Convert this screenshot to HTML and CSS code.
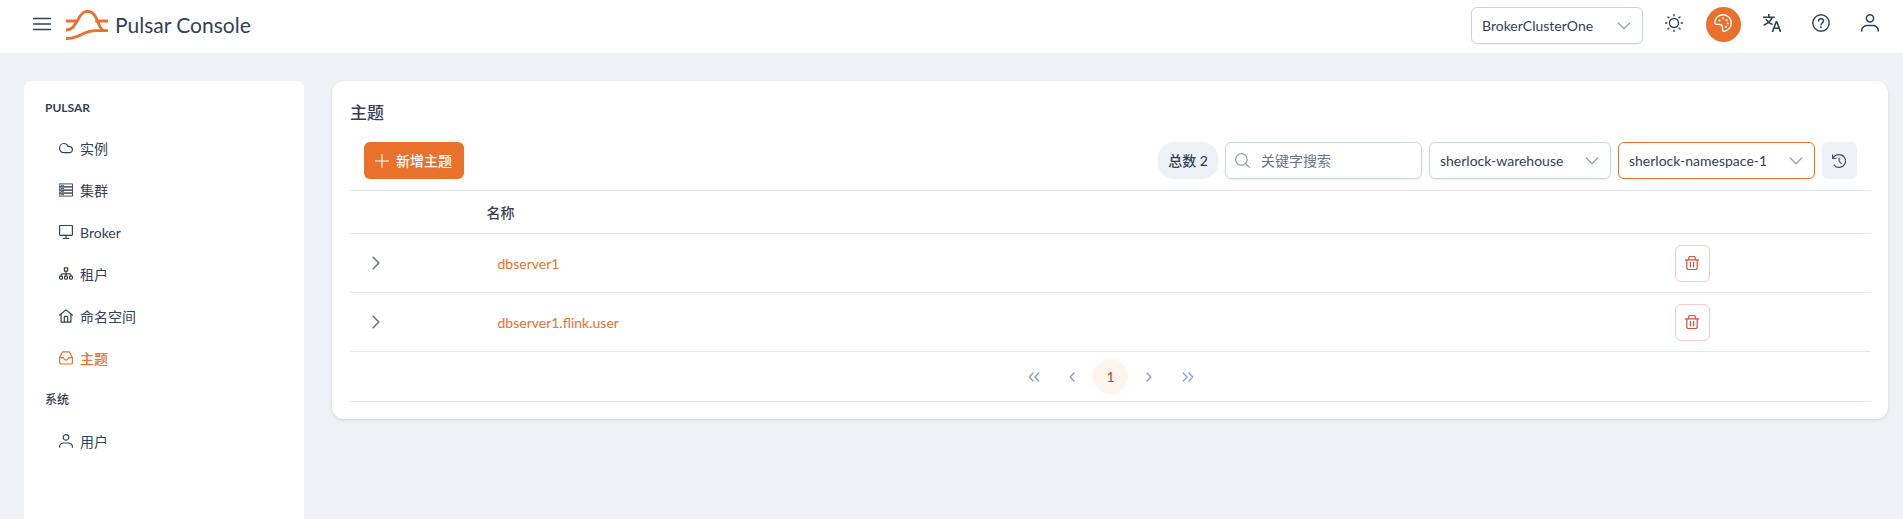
FILE: index.html
```html
<!DOCTYPE html>
<html lang="zh-CN">
<head>
<meta charset="utf-8">
<title>Pulsar Console</title>
<link rel="stylesheet" href="styles.css">
</head>
<body>
<svg class="sprite" aria-hidden="true">
  <symbol id="down" viewBox="0 0 14 14"><path d="M1.3 4 7 9.8 12.7 4"/></symbol>
  <symbol id="right" viewBox="0 0 14 14"><path d="M4.2 1.3 9.8 7 4.2 12.7"/></symbol>
  <symbol id="user" viewBox="0 0 14 14"><circle cx="7" cy="3.4" r="2.8"/><path d="M.6 13.2v-.7C.6 10.4 2.800 9 4.800 9h4.400c2 0 4.200 1.400 4.200 3.500v.7"/></symbol>
  <symbol id="trash" viewBox="0 0 14 14"><path d="M.2 3.800h13.600M1.800 3.800v8c0 1 .6 1.700 1.600 1.700h7.200c1 0 1.600-.7 1.600-1.700v-8M3.700 3.600V2c0-.9.5-1.500 1.400-1.500h3.800c.9 0 1.400.6 1.400 1.500v1.600M5.400 6.400v4.400M8.600 6.400v4.400"/></symbol>
</svg>

<header class="topbar">
  <svg class="burger icon" viewBox="0 0 18 14"><path d="M.6 1.500h16.800M.6 7h16.800M.6 12.500h16.800"/></svg>
  <svg class="logo" viewBox="0 0 126 90"><path d="M0 33h36M88 33h38M0 60C36 60 33 4 65 4s30 56 48 57M0 85.500C44 85.500 46 62 92 62h34"/></svg>
  <span class="brand">Pulsar Console</span>
  <div class="select cluster"><span>BrokerClusterOne</span><svg class="icon caret"><use href="#down"/></svg></div>
  <nav class="actions">
    <button class="action"><svg class="icon" viewBox="0 0 18 18"><circle cx="9" cy="9" r="4.500"/><path d="M9 .4v1.400M9 16.200v1.400M.4 9h1.400M16.200 9h1.400M3 3l.8.8M14.200 14.200l.8.8M3 15l.8-.8M14.200 3.800 15 3"/></svg></button>
    <button class="action primary"><svg class="icon" viewBox="0 0 18 18"><path d="M.8 8.200C1.400 3.800 4.800.8 9.100.8c4.600 0 8.200 3.600 8.200 8.200 0 4.200-3 7.500-6.900 8.200-1.200.2-1.900-.5-1.900-1.500v-2.200c0-2-1.700-3-3.500-3.100L2 10.200C1.100 10 .6 9.300.8 8.200Z"/><g class="dots"><circle cx="5.400" cy="6.600" r="1.050"/><circle cx="9" cy="4.300" r="1.050"/><circle cx="12.600" cy="6" r="1.050"/><circle cx="13.700" cy="9.500" r="1.050"/><circle cx="11.900" cy="12.900" r="1.050"/></g></svg></button>
    <button class="action"><svg class="icon bold" viewBox="0 0 18 18"><path d="M.4 3.300h10.800M5.800.3v3M9 3.500C7.800 7 4.900 9.300 1.200 10.900M3.200 5.600c1.100 1.900 3.300 3.600 5.800 4.700M9.600 17.500l3.500-9.600h.8l3.500 9.600M10.900 14.200h5.200"/></svg></button>
    <button class="action"><svg class="icon" viewBox="0 0 18 18"><circle cx="9" cy="9" r="8.200"/><path d="M6.600 7.100C6.600 5.600 7.600 4.700 9 4.700s2.500.9 2.500 2.300c0 1.800-2.500 1.900-2.500 3.900"/><circle class="solid" cx="9" cy="13.200" r=".95"/></svg></button>
    <button class="action"><svg class="icon"><use href="#user"/></svg></button>
  </nav>
</header>

<div class="layout">
  <aside class="sidebar">
    <h2 class="group">PULSAR</h2>
    <a class="item"><svg class="icon" viewBox="0 0 14 14"><path d="M4.700 11.600C2.300 11.600.6 9.600.6 7.100.6 4.500 2.400 2.500 4.800 2.500c1.900 0 3.500 1.100 4.100 2.900 2.500-.5 4.500 1 4.500 3.100 0 1.900-1.300 3.100-3.100 3.100Z"/></svg>实例</a>
    <a class="item"><svg class="icon thin" viewBox="0 0 14 14"><path d="M.5.900h13v3H.5ZM.5 3.900h13v3.200H.5ZM.5 7.100h13v3H.5ZM.5 10.100h13v3H.5ZM2 2.400h.9M3.800 2.400h.9M2 5.500h.9M3.800 5.500h.9M2 8.600h.9M3.800 8.600h.9M2 11.600h.9M3.800 11.600h.9"/></svg>集群</a>
    <a class="item"><svg class="icon" viewBox="0 0 14 14"><rect x=".6" y=".5" width="12.800" height="9.800" rx=".7"/><path d="M7 10.300v3M4.200 13.500h5.600"/></svg>Broker</a>
    <a class="item"><svg class="icon" viewBox="0 0 14 14"><path d="M5.400.8h3.200v3.300H5.400ZM7 4.100v4.800M2.100 9V8c0-.8.5-1.200 1.200-1.200h7.400c.7 0 1.200.4 1.200 1.200v1"/><rect x=".6" y="9.100" width="2.900" height="3" rx=".8"/><rect x="5.500" y="9.100" width="2.900" height="3" rx=".8"/><rect x="10.500" y="9.100" width="2.900" height="3" rx=".8"/></svg>租户</a>
    <a class="item"><svg class="icon" viewBox="0 0 14 14"><path d="M.4 6.200 7 .9l6.600 5.300M2.100 5v8.100h9.800V5M5.300 13V8.100c0-.5.3-.7.700-.7h2c.4 0 .7.200.7.700V13"/></svg>命名空间</a>
    <a class="item active"><svg class="icon" viewBox="0 0 14 14"><path d="M.6 6.700h3.500c.8 0 .7 2.500 2.900 2.500s2.100-2.500 2.900-2.500h3.500M.6 6.700v5c0 .8.5 1.300 1.300 1.300h10.200c.8 0 1.300-.5 1.300-1.300v-5L11 1.700C10.700 1 10.400.8 9.800.8H4.200c-.6 0-.9.200-1.200.9Z"/></svg>主题</a>
    <h2 class="group second">系统</h2>
    <a class="item"><svg class="icon"><use href="#user"/></svg>用户</a>
  </aside>

  <main class="card">
    <h1 class="title">主题</h1>
    <div class="toolbar">
      <button class="create"><svg class="icon" viewBox="0 0 14 14"><path d="M7 .3v13.400M.3 7h13.400"/></svg>新增主题</button>
      <div class="filters">
        <span class="total">总数 2</span>
        <div class="search"><svg class="icon" viewBox="0 0 14 14"><circle cx="6" cy="6" r="5.400"/><path d="m10 10 3.700 3.700"/></svg><span>关键字搜索</span></div>
        <div class="select tenant"><span>sherlock-warehouse</span><svg class="icon caret"><use href="#down"/></svg></div>
        <div class="select namespace"><span>sherlock-namespace-1</span><svg class="icon caret"><use href="#down"/></svg></div>
        <button class="refresh"><svg class="icon" viewBox="0 0 14 14"><path d="M.6.900v3.600h3.600M1 4.300C2.100 2 4.300.6 7.100.6a6.400 6.400 0 1 1-5 10.400M7.100 4v3.400l2.200 2"/></svg></button>
      </div>
    </div>
    <div class="row head"><span></span><span>名称</span></div>
    <div class="row">
      <svg class="icon expand"><use href="#right"/></svg>
      <a class="link">dbserver1</a>
      <button class="delete"><svg class="icon"><use href="#trash"/></svg></button>
    </div>
    <div class="row">
      <svg class="icon expand"><use href="#right"/></svg>
      <a class="link">dbserver1.flink.user</a>
      <button class="delete"><svg class="icon"><use href="#trash"/></svg></button>
    </div>
    <div class="pager">
      <span class="page"><svg class="icon" viewBox="0 0 14 14"><path d="M6.100 3 2.300 7l3.800 4M11.700 3 7.900 7l3.800 4"/></svg></span>
      <span class="page"><svg class="icon" viewBox="0 0 14 14"><path d="M9 3 5.200 7 9 11"/></svg></span>
      <span class="page current">1</span>
      <span class="page"><svg class="icon" viewBox="0 0 14 14"><path d="M5 3l3.800 4L5 11"/></svg></span>
      <span class="page"><svg class="icon" viewBox="0 0 14 14"><path d="M2.300 3l3.800 4-3.800 4M7.900 3l3.800 4-3.800 4"/></svg></span>
    </div>
  </main>
</div>
</body>
</html>
```
FILE: styles.css
```css
* { box-sizing: border-box; }

body {
  margin: 0;
  height: 519px;
  overflow: hidden;
  background: #eef2f7;
  color: #334155;
  font: 14px/17px Lato, "Noto Sans CJK SC", sans-serif;
}

button {
  display: flex;
  align-items: center;
  justify-content: center;
  padding: 0;
  border: 0;
  background: none;
  color: inherit;
  font: inherit;
}

.sprite { display: none; }

.icon {
  flex: none;
  width: 14px;
  height: 14px;
  fill: none;
  stroke: currentColor;
  stroke-width: 1.2;
  stroke-linecap: round;
  stroke-linejoin: round;
}

.topbar {
  display: flex;
  align-items: center;
  height: 53px;
  padding: 0 15px 0 32.5px;
  background: #fff;
}

.burger {
  width: 18px;
  height: 14px;
  margin-top: -5px;
  stroke-width: 1.5;
}

.logo {
  width: 42px;
  height: 30px;
  margin: -3px 7px 0 15.5px;
  fill: none;
  stroke: #ea712b;
  stroke-width: 8.5;
}

.brand {
  font-size: 21px;
  line-height: 26px;
  margin-top: -3px;
}

.select {
  display: flex;
  align-items: center;
  justify-content: space-between;
  height: 37px;
  padding: 0 11px 0 10px;
  border: 1px solid #cbd5e1;
  border-radius: 6px;
  background: #fff;
  box-shadow: 0 1px 2px rgba(18, 18, 23, .05);
}

.caret { color: #94a3b8; stroke-width: 1.3; }

.cluster { width: 172px; margin-left: auto; margin-top: -2px; }

.actions {
  display: flex;
  gap: 14px;
  margin: -4px 0 0 14px;
}

.action {
  width: 35px;
  height: 35px;
  border-radius: 50%;
  padding: 0 1px 3px 0;
}

.action .icon { width: 18px; height: 18px; stroke-width: 1.4; }
.action .bold { stroke-width: 1.6; }
.action use { stroke-width: 1.2; }
.dots, .solid { fill: currentColor; stroke: none; }
.primary { background: #ea712b; color: #fff; }

.layout {
  display: flex;
  align-items: flex-start;
  gap: 28px;
  padding: 28px 15px 0 24px;
}

.sidebar {
  width: 280px;
  height: 460px;
  padding: 18px 21px;
  border-radius: 6px;
  background: #fff;
}

.group {
  margin: 0 0 11px;
  height: 17px;
  font-size: 12px;
  line-height: 17px;
  font-weight: 700;
}

.second { margin: 12px 0; font-weight: 500; }

.item {
  display: flex;
  align-items: center;
  gap: 7px;
  height: 42px;
  padding-left: 14px;
}

.item .icon { margin-top: -1px; }
.item .thin { stroke-width: .9; }
.active { color: #ea712b; font-weight: 500; }

.card {
  flex: 1;
  height: 338px;
  padding: 18px 17px 0 18px;
  border-radius: 12px;
  background: #fff;
  box-shadow: 0 1px 3px rgba(0, 0, 0, .13);
}

.title {
  margin: 0;
  height: 26px;
  font-size: 17px;
  line-height: 28px;
  font-weight: 500;
}

.toolbar {
  display: flex;
  justify-content: space-between;
  height: 66px;
  padding: 17px 14px 0;
  border-bottom: 1px solid #e2e8f0;
}

.create {
  gap: 7px;
  width: 100px;
  height: 37px;
  padding-right: 1px;
  border-radius: 6px;
  background: #ea712b;
  color: #fff;
  font-weight: 500;
}

.filters { display: flex; gap: 7px; }

.total {
  width: 60px;
  height: 37px;
  line-height: 37px;
  text-align: center;
  border-radius: 16px;
  background: #eef2f7;
  font-weight: 500;
}

.search {
  display: flex;
  align-items: center;
  gap: 11px;
  width: 197px;
  height: 37px;
  padding-left: 9px;
  border: 1px solid #cbd5e1;
  border-radius: 6px;
  color: #64748b;
  box-shadow: 0 1px 2px rgba(18, 18, 23, .05);
}

.search .icon { width: 15px; height: 15px; color: #94a3b8; }

.tenant { width: 182px; }
.namespace { width: 197px; border-color: #ea712b; }

.refresh {
  width: 35px;
  height: 37px;
  padding-right: 1px;
  border-radius: 6px;
  background: #eef2f7;
  color: #475569;
}

.row {
  display: grid;
  grid-template-columns: 147.5px 1fr 196px;
  align-items: center;
  height: 59px;
  border-bottom: 1px solid #e2e8f0;
}

.head {
  grid-template-columns: 136.5px 1fr;
  height: 43px;
  font-weight: 500;
}

.expand { margin-left: 19px; color: #64748b; stroke-width: 1.6; }
.link { color: #ea712b; }

.delete {
  width: 35px;
  height: 37px;
  padding-right: 1px;
  border: 1px solid #fbcaca;
  border-radius: 6px;
  color: #dc4b40;
}

.pager {
  display: flex;
  align-items: center;
  justify-content: center;
  gap: 3.5px;
  height: 50px;
  border-bottom: 1px solid #e2e8f0;
}

.page {
  display: flex;
  align-items: center;
  justify-content: center;
  width: 35px;
  height: 35px;
  border-radius: 50%;
  color: #94a3b8;
}

.page .icon { stroke-width: 1.5; }
.current { background: #fff5eb; color: #c0431f; }
```
